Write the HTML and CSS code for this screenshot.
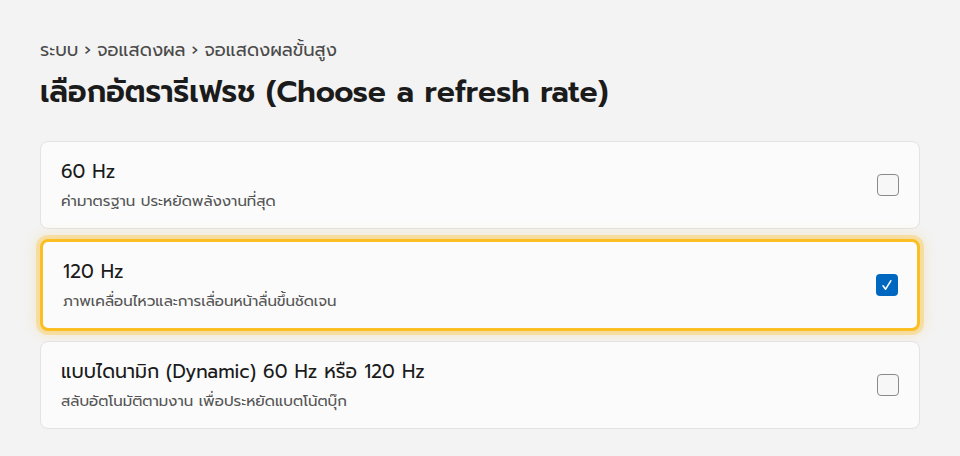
FILE: index.html
```html
<!DOCTYPE html>
<html lang="th">
<head>
<meta charset="utf-8">
<link rel="stylesheet" href="styles.css">
</head>
<body>
<main class="page">
  <nav class="crumbs">
    <span>ระบบ</span><span class="sep">›</span><span>จอแสดงผล</span><span class="sep">›</span><span>จอแสดงผลขั้นสูง</span>
  </nav>
  <h1 class="title">เลือกอัตรารีเฟรช (Choose a refresh rate)</h1>
  <div class="list">
    <label class="card">
      <div class="text">
        <div class="name">60 Hz</div>
        <div class="desc">ค่ามาตรฐาน ประหยัดพลังงานที่สุด</div>
      </div>
      <span class="box"></span>
    </label>
    <label class="card selected">
      <div class="text">
        <div class="name">120 Hz</div>
        <div class="desc">ภาพเคลื่อนไหวและการเลื่อนหน้าลื่นขึ้นชัดเจน</div>
      </div>
      <span class="box checked"><svg viewBox="0 0 22 22" width="22" height="22"><path d="M7 11.8 L9.6 15.2 L14.8 6.8" fill="none" stroke="#fff" stroke-width="1.6" stroke-linecap="round" stroke-linejoin="round"/></svg></span>
    </label>
    <label class="card">
      <div class="text">
        <div class="name">แบบไดนามิก (Dynamic) 60 Hz หรือ 120 Hz</div>
        <div class="desc">สลับอัตโนมัติตามงาน เพื่อประหยัดแบตโน้ตบุ๊ก</div>
      </div>
      <span class="box"></span>
    </label>
  </div>
</main>
</body>
</html>
```
FILE: styles.css
```css
html, body {
  margin: 0;
  padding: 0;
  background: #f3f3f3;
}
body {
  font-family: "Prompt", "Noto Sans Thai", sans-serif;
  color: #1b1b1b;
}
.page {
  padding: 38px 40px 0 40px;
}
.crumbs {
  display: flex;
  gap: 6px;
  font-size: 18px;
  line-height: 24px;
  color: #4a4a4a;
}
.title {
  margin: 10px 0 0 0;
  font-size: 30px;
  line-height: 40px;
  font-weight: 600;
  color: #1b1b1b;
}
.list {
  margin-top: 29px;
  display: flex;
  flex-direction: column;
  gap: 10px;
  width: 880px;
}
.card {
  display: flex;
  align-items: center;
  justify-content: space-between;
  box-sizing: border-box;
  height: 88px;
  padding: 0 20px 0 20px;
  background: #fbfbfb;
  border: 1px solid #e3e3e3;
  border-radius: 8px;
}
.card.selected {
  height: 92px;
  border: 3px solid #fbbf24;
  box-shadow: 0 0 0 4px rgba(251, 191, 36, 0.32), 0 0 14px 4px rgba(251, 191, 36, 0.2);
  padding: 0 19px 0 20px;
}
.name {
  font-size: 19px;
  line-height: 26px;
  color: #1b1b1b;
}
.desc {
  margin-top: 5px;
  font-size: 15px;
  line-height: 22px;
  color: #555;
}
.box {
  width: 22px;
  height: 22px;
  box-sizing: border-box;
  border: 1.5px solid #8a8a8a;
  border-radius: 4px;
  background: #f7f7f7;
}
.box.checked {
  border: none;
  background: #0067c0;
  display: flex;
}
```
